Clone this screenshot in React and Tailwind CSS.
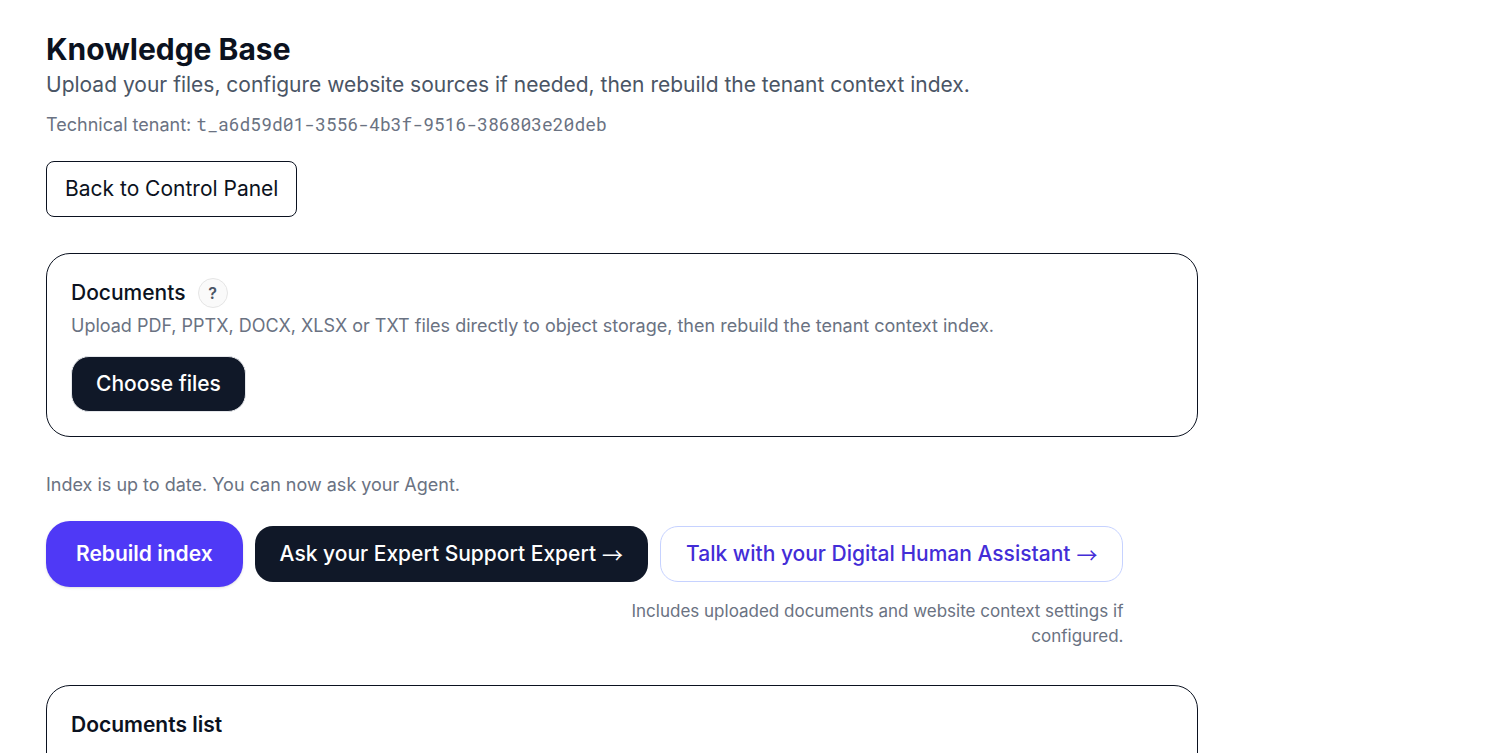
function Card({ children }) {
  return (
    <section className="rounded-3xl border border-[#0b1220] p-6">{children}</section>
  );
}

function Arrow() {
  return <span className="font-['Noto_Sans_CJK_SC',sans-serif] font-normal leading-none">→</span>;
}

export default function App() {
  return (
    <main className="h-screen overflow-hidden bg-white font-['Inter',sans-serif] text-[21px] leading-[30px] text-[#0b1220]">
      <div className="max-w-[1244px] px-[46px] pt-8">
        <header>
          <h1 className="text-[30px] leading-[34px] font-bold">Knowledge Base</h1>
          <p className="mt-0.5 leading-[34px] text-gray-600">
            Upload your files, configure website sources if needed, then rebuild the tenant context index.
          </p>
          <p className="mt-2.5 text-[18px] leading-6 text-gray-500">
            Technical tenant: <span className="font-['Roboto_Mono','Liberation_Mono',monospace]">t_a6d59d01-3556-4b3f-9516-386803e20deb</span>
          </p>
          <a href="#control-panel" className="mt-6 inline-flex h-14 items-center rounded-lg border border-[#0b1220] px-[18px]">
            Back to Control Panel
          </a>
        </header>

        <div className="mt-9">
          <Card>
            <div className="flex items-center gap-3">
              <h2 className="font-medium">Documents</h2>
              <button type="button" aria-label="About documents" className="flex size-[30px] items-center justify-center rounded-full border border-neutral-200 bg-neutral-50 text-[16px] font-semibold text-gray-600">
                ?
              </button>
            </div>
            <p className="mt-1.5 text-[18px] leading-6 text-gray-500">
              Upload PDF, PPTX, DOCX, XLSX or TXT files directly to object storage, then rebuild the tenant context index.
            </p>
            <button type="button" className="mt-[18px] h-14 rounded-[18px] border border-gray-200 bg-gray-900 px-6 font-medium text-white">
              Choose files
            </button>
          </Card>
        </div>

        <p className="mt-9 text-[18px] leading-6 text-gray-500">Index is up to date. You can now ask your Agent.</p>

        <div className="mt-6 flex w-fit flex-col items-end">
          <div className="flex items-center gap-3">
            <button type="button" className="h-[66px] rounded-3xl bg-[#4f39f6] px-[30px] font-semibold text-white shadow-sm">
              Rebuild index
            </button>
            <a href="#expert" className="flex h-14 items-center gap-1.5 rounded-[18px] bg-gray-900 px-[25px] font-medium text-white">
              Ask your Expert Support Expert <Arrow />
            </a>
            <a href="#assistant" className="flex h-14 items-center gap-1.5 rounded-[18px] border border-indigo-200 px-[25px] font-medium text-[#432dd7]">
              Talk with your Digital Human Assistant <Arrow />
            </a>
          </div>
          <p className="mt-3 max-w-[500px] text-right text-[17px] leading-[25px] text-gray-500">
            Includes uploaded documents and website context settings if configured.
          </p>
        </div>

        <div className="mt-9">
          <Card>
            <h2 className="pb-6 font-semibold">Documents list</h2>
          </Card>
        </div>
      </div>
    </main>
  );
}
